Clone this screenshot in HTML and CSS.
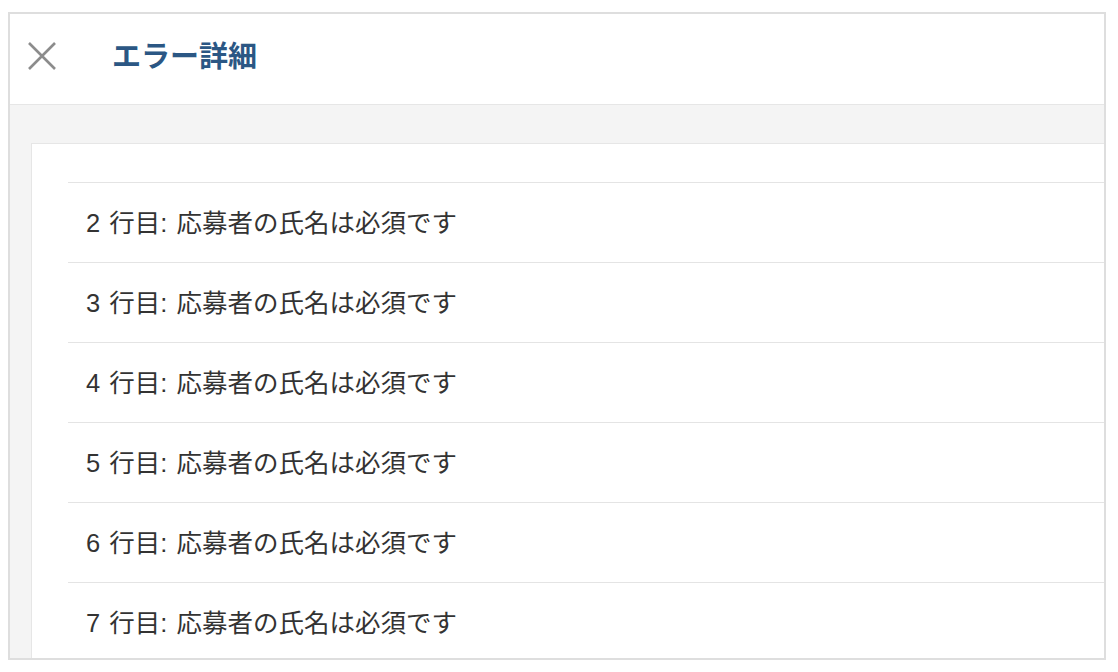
FILE: index.html
```html
<!DOCTYPE html>
<html lang="ja">
<head>
  <meta charset="UTF-8">
  <meta name="viewport" content="width=device-width, initial-scale=1.0">
  <title>エラー詳細</title>
  <link rel="stylesheet" href="styles.css">
</head>
<body>
  <div class="modal">
    <header class="modal-header">
      <button class="close-btn" aria-label="閉じる">
        <svg width="30" height="30" viewBox="0 0 30 30">
          <path d="M2 2 L28 28 M28 2 L2 28" stroke="#8c8c8c" stroke-width="2.6" fill="none"/>
        </svg>
      </button>
      <h1 class="modal-title">エラー詳細</h1>
    </header>

    <div class="modal-body">
      <div class="error-panel">
        <ul class="error-list">
          <li>2 行目: 応募者の氏名は必須です</li>
          <li>3 行目: 応募者の氏名は必須です</li>
          <li>4 行目: 応募者の氏名は必須です</li>
          <li>5 行目: 応募者の氏名は必須です</li>
          <li>6 行目: 応募者の氏名は必須です</li>
          <li>7 行目: 応募者の氏名は必須です</li>
        </ul>
      </div>
    </div>
  </div>
</body>
</html>
```

FILE: styles.css
```css
* {
  box-sizing: border-box;
}
body {
  margin: 0;
  background: #fff;
  font-family: "Liberation Sans", "Noto Sans CJK JP", sans-serif;
  color: #333;
}
.modal {
  margin: 12px 0 0 8px;
  width: 1098px;
  height: 648px;
  border: 2px solid #dedede;
  background: #f4f4f4;
  overflow: hidden;
  display: flex;
  flex-direction: column;
}
/* Header */
.modal-header {
  height: 91px;
  flex-shrink: 0;
  background: #fff;
  border-bottom: 1px solid #e6e6e6;
  display: flex;
  align-items: center;
  padding: 0 0 10px 16px;
}
.close-btn {
  width: 32px;
  height: 32px;
  padding: 0;
  margin-top: 4px;
  border: none;
  background: none;
  display: flex;
  align-items: center;
  justify-content: center;
}
.modal-title {
  margin: 0 0 0 54px;
  font-size: 29px;
  font-weight: bold;
  color: #2b5784;
  font-family: "Noto Sans CJK JP", sans-serif;
}
/* Body */
.modal-body {
  flex: 1;
  padding: 38px 0 0 21px;
}
.error-panel {
  width: 1120px;
  height: 100%;
  background: #fff;
  border: 1px solid #e6e6e6;
  padding: 38px 0 0 36px;
}
.error-list {
  list-style: none;
  margin: 0;
  padding: 0;
}
.error-list li {
  height: 80px;
  border-top: 1px solid #e4e4e4;
  padding: 0 0 5px 18px;
  display: flex;
  align-items: center;
  font-size: 25.5px;
  word-spacing: 2px;
  color: #333;
}
```
